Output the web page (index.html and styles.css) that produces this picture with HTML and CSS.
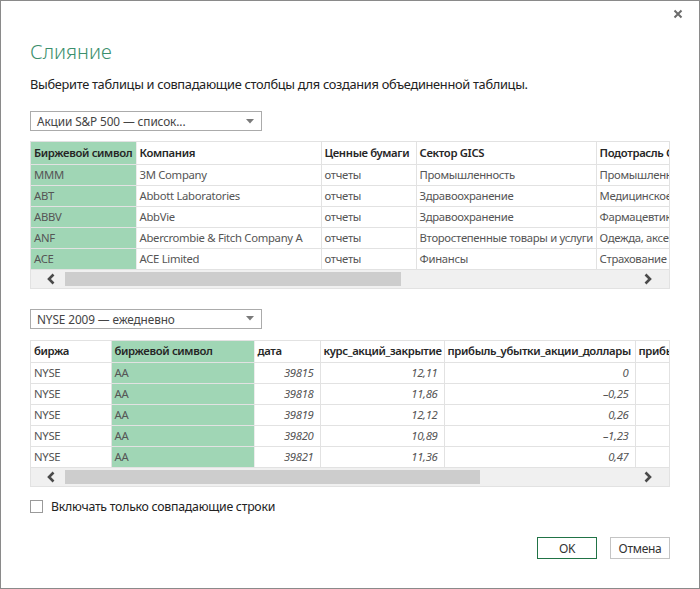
FILE: index.html
```html
<!DOCTYPE html>
<html lang="ru">
<head>
<meta charset="utf-8">
<title>Слияние</title>
<link rel="stylesheet" href="styles.css">
</head>
<body>
<div class="window">
  <div class="close-row">
    <svg class="close" width="10" height="10" viewBox="0 0 10 10"><path d="M1.5 1.5 L8.5 8.5 M8.5 1.5 L1.5 8.5" stroke="#6b6b6b" stroke-width="2" fill="none"/></svg>
  </div>
  <h1 class="title">Слияние</h1>
  <p class="subtitle">Выберите таблицы и совпадающие столбцы для создания объединенной таблицы.</p>

  <div class="select">
    <span>Акции S&amp;P 500 — список...</span>
    <svg class="caret" width="8" height="5" viewBox="0 0 8 5"><path d="M0 0 H8 L4 4.5 Z" fill="#7a7a7a"/></svg>
  </div>

  <div class="grid">
    <div class="grid-clip">
      <table class="t1">
        <colgroup><col style="width:105px"><col style="width:185px"><col style="width:95px"><col style="width:180px"><col style="width:150px"></colgroup>
        <thead>
          <tr><th class="sel">Биржевой символ</th><th>Компания</th><th>Ценные бумаги</th><th>Сектор GICS</th><th>Подотрасль GICS</th></tr>
        </thead>
        <tbody>
          <tr><td class="sel">MMM</td><td>3M Company</td><td>отчеты</td><td>Промышленность</td><td>Промышленность</td></tr>
          <tr><td class="sel">ABT</td><td>Abbott Laboratories</td><td>отчеты</td><td>Здравоохранение</td><td>Медицинское</td></tr>
          <tr><td class="sel">ABBV</td><td>AbbVie</td><td>отчеты</td><td>Здравоохранение</td><td>Фармацевтика</td></tr>
          <tr><td class="sel">ANF</td><td>Abercrombie &amp; Fitch Company A</td><td>отчеты</td><td>Второстепенные товары и услуги</td><td>Одежда, аксессуары</td></tr>
          <tr><td class="sel">ACE</td><td>ACE Limited</td><td>отчеты</td><td>Финансы</td><td>Страхование</td></tr>
        </tbody>
      </table>
    </div>
    <div class="hscroll">
      <svg class="arrow" width="10" height="12" viewBox="0 0 10 12"><path d="M7.5 1.5 L3 6 L7.5 10.5" stroke="#4a4a4a" stroke-width="2.6" fill="none"/></svg>
      <div class="track"><div class="thumb thumb1"></div></div>
      <svg class="arrow" width="10" height="12" viewBox="0 0 10 12"><path d="M2.5 1.5 L7 6 L2.5 10.5" stroke="#4a4a4a" stroke-width="2.6" fill="none"/></svg>
    </div>
  </div>

  <div class="select select2">
    <span>NYSE 2009 — ежедневно</span>
    <svg class="caret" width="8" height="5" viewBox="0 0 8 5"><path d="M0 0 H8 L4 4.5 Z" fill="#7a7a7a"/></svg>
  </div>

  <div class="grid grid2">
    <div class="grid-clip">
      <table class="t2">
        <colgroup><col style="width:80px"><col style="width:143px"><col style="width:66px"><col style="width:124px"><col style="width:191px"><col style="width:100px"></colgroup>
        <thead>
          <tr><th>биржа</th><th class="sel">биржевой символ</th><th>дата</th><th>курс_акций_закрытие</th><th>прибыль_убытки_акции_доллары</th><th>прибыль_убытки</th></tr>
        </thead>
        <tbody>
          <tr><td>NYSE</td><td class="sel">AA</td><td class="num">39815</td><td class="num">12,11</td><td class="num">0</td><td></td></tr>
          <tr><td>NYSE</td><td class="sel">AA</td><td class="num">39818</td><td class="num">11,86</td><td class="num">–0,25</td><td></td></tr>
          <tr><td>NYSE</td><td class="sel">AA</td><td class="num">39819</td><td class="num">12,12</td><td class="num">0,26</td><td></td></tr>
          <tr><td>NYSE</td><td class="sel">AA</td><td class="num">39820</td><td class="num">10,89</td><td class="num">–1,23</td><td></td></tr>
          <tr><td>NYSE</td><td class="sel">AA</td><td class="num">39821</td><td class="num">11,36</td><td class="num">0,47</td><td></td></tr>
        </tbody>
      </table>
    </div>
    <div class="hscroll">
      <svg class="arrow" width="10" height="12" viewBox="0 0 10 12"><path d="M7.5 1.5 L3 6 L7.5 10.5" stroke="#4a4a4a" stroke-width="2.6" fill="none"/></svg>
      <div class="track"><div class="thumb thumb2"></div></div>
      <svg class="arrow" width="10" height="12" viewBox="0 0 10 12"><path d="M2.5 1.5 L7 6 L2.5 10.5" stroke="#4a4a4a" stroke-width="2.6" fill="none"/></svg>
    </div>
  </div>

  <label class="check">
    <span class="box"></span>
    <span class="check-label">Включать только совпадающие строки</span>
  </label>

  <div class="buttons">
    <button class="btn ok">OK</button>
    <button class="btn">Отмена</button>
  </div>
</div>
</body>
</html>
```

FILE: styles.css
```css
html, body {
  margin: 0;
  padding: 0;
  background: #ffffff;
}
body {
  font-family: "Noto Sans", "Open Sans", sans-serif;
  color: #333333;
}
.window {
  box-sizing: border-box;
  width: 700px;
  height: 589px;
  border: 1px solid #8a8a8a;
  padding: 0 29px;
  position: relative;
}
.close-row {
  display: flex;
  justify-content: flex-end;
  padding-top: 8px;
  margin-right: -13px;
  height: 11px;
}
.close {
  display: block;
}
.title {
  margin: 19px 0 0 0;
  font-size: 20px;
  font-weight: 300;
  color: #3c8f6d;
  line-height: 26px;
  height: 26px;
}
.subtitle {
  margin: 10px 0 0 0;
  font-size: 12.8px;
  line-height: 18px;
  color: #222222;
  letter-spacing: -0.3px;
}
.select {
  box-sizing: border-box;
  width: 232px;
  height: 20px;
  border: 1px solid #ababab;
  margin-top: 18px;
  display: flex;
  align-items: center;
  justify-content: space-between;
  padding: 0 7px 0 6px;
  font-size: 11.8px;
  color: #444444;
  letter-spacing: -0.1px;
}
.select2 {
  margin-top: 20px;
}
.caret {
  display: block;
}
.grid {
  margin-top: 10px;
  width: 640px;
  box-sizing: border-box;
  border: 1px solid #e2e2e2;
}
.grid2 {
  margin-top: 11px;
}
.grid-clip {
  overflow: hidden;
}
table {
  border-collapse: collapse;
  table-layout: fixed;
  width: 715px;
  font-size: 11.3px;
}
.t2 { width: 704px; }
thead tr { height: 22px; }
tbody tr { height: 21px; }
th, td {
  padding: 0 3px;
  border-right: 1px solid #e2e2e2;
  border-bottom: 1px solid #e2e2e2;
  white-space: nowrap;
  overflow: hidden;
  text-align: left;
  line-height: 18px;
  letter-spacing: -0.3px;
}
th {
  font-weight: 600;
  color: #262626;
  letter-spacing: -0.35px;
}
td {
  color: #555555;
}
.sel {
  background: #a0d6b5;
  border-right-color: #ececec;
}
td.num {
  text-align: right;
  font-style: italic;
  padding-right: 6px;
}
.hscroll {
  display: flex;
  align-items: center;
  height: 18px;
  background: #f0f0f0;
  padding: 0 16px 0 15px;
}
.arrow {
  display: block;
  flex: none;
}
.track {
  flex: 1;
  height: 14px;
  margin: 0 9px;
}
.thumb {
  height: 14px;
  background: #cdcdcd;
}
.thumb1 { width: 336px; }
.thumb2 { width: 415px; }
.check {
  display: flex;
  align-items: center;
  margin-top: 13px;
  gap: 8px;
  height: 13px;
}
.box {
  box-sizing: border-box;
  width: 13px;
  height: 13px;
  border: 1px solid #9a9a9a;
  background: #ffffff;
}
.check-label {
  font-size: 12.3px;
  line-height: 13px;
  color: #222222;
  letter-spacing: -0.25px;
}
.buttons {
  display: flex;
  justify-content: flex-end;
  gap: 13px;
  margin-top: 24px;
}
.btn {
  box-sizing: border-box;
  width: 60px;
  height: 22px;
  border: 1px solid #c4c4c4;
  background: #ffffff;
  font-family: "Noto Sans", "Open Sans", sans-serif;
  font-size: 12px;
  color: #333333;
  padding: 0;
  letter-spacing: -0.3px;
}
.btn.ok {
  border-color: #217346;
}
```
